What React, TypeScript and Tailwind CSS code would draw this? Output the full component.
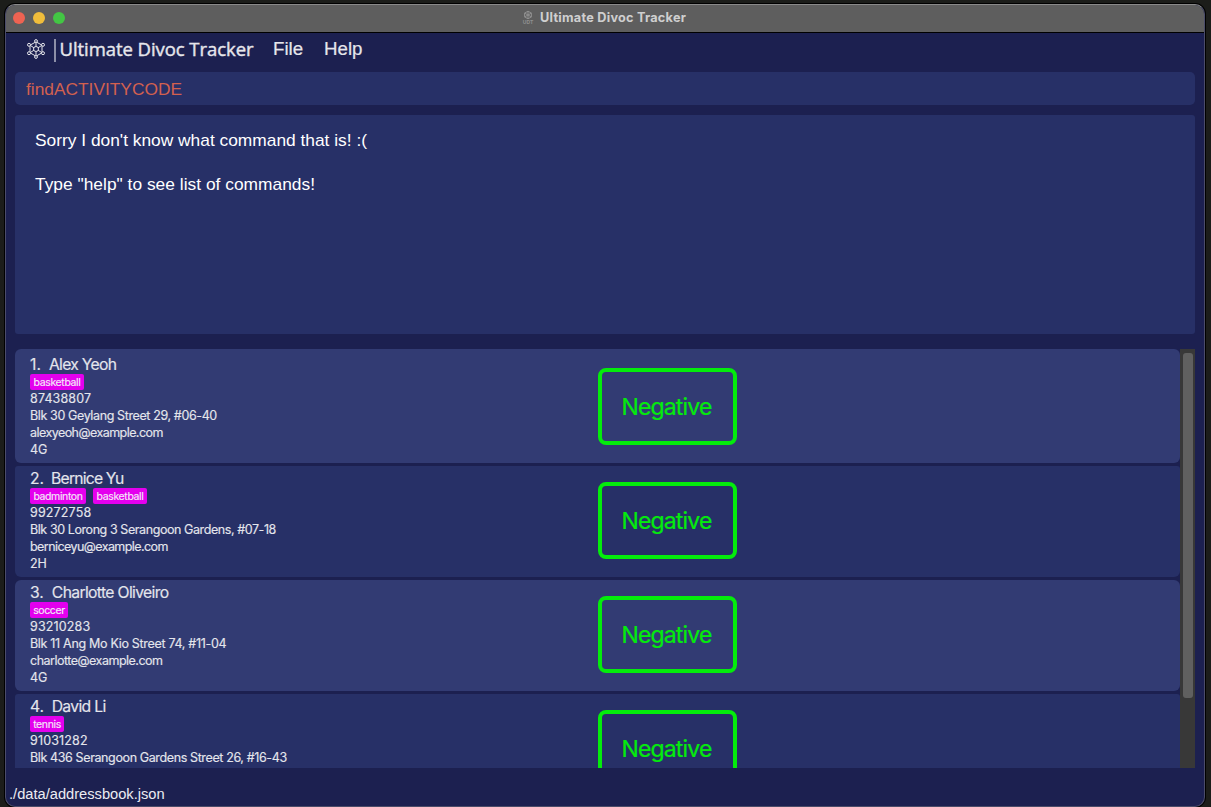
import React from "react";

type Person = {
  index: string;
  name: string;
  nameTracking: string;
  tags: { label: string; width: string }[];
  phone: string;
  address: string;
  addressTracking: string;
  email?: string;
  emailTracking?: string;
  group?: string;
};

const people: Person[] = [
  {
    index: "1.", name: "Alex Yeoh", nameTracking: "ml-[8px] tracking-[-0.7px]",
    tags: [{ label: "basketball", width: "w-[54px]" }],
    phone: "87438807", address: "Blk 30 Geylang Street 29, #06-40", addressTracking: "tracking-[-0.38px]",
    email: "alexyeoh@example.com", emailTracking: "tracking-[-0.55px]", group: "4G",
  },
  {
    index: "2.", name: "Bernice Yu", nameTracking: "ml-[7px] tracking-[-0.8px]",
    tags: [{ label: "badminton", width: "w-[56px]" }, { label: "basketball", width: "w-[54px]" }],
    phone: "99272758", address: "Blk 30 Lorong 3 Serangoon Gardens, #07-18", addressTracking: "tracking-[-0.42px]",
    email: "berniceyu@example.com", emailTracking: "tracking-[-0.57px]", group: "2H",
  },
  {
    index: "3.", name: "Charlotte Oliveiro", nameTracking: "ml-[8px] tracking-[-0.65px]",
    tags: [{ label: "soccer", width: "w-[38px]" }],
    phone: "93210283", address: "Blk 11 Ang Mo Kio Street 74, #11-04", addressTracking: "tracking-[-0.31px]",
    email: "charlotte@example.com", emailTracking: "tracking-[-0.5px]", group: "4G",
  },
  {
    index: "4.", name: "David Li", nameTracking: "ml-[7.5px] tracking-[-0.65px]",
    tags: [{ label: "tennis", width: "w-[34px]" }],
    phone: "91031282", address: "Blk 436 Serangoon Gardens Street 26, #16-43", addressTracking: "tracking-[-0.38px]",
  },
];

function VirusIcon({ className }: { className: string }) {
  return (
    <svg viewBox="0 0 20 20" className={className} fill="none" stroke="currentColor" strokeWidth="1">
      <path d="M10 2.8 16 6.2v7.6L10 17.2 4 13.8V6.2z" />
      <path d="M10 2.4v5M4 6.2l3.9 2.6M16 6.2l-3.9 2.6M4 13.8l3.9-2.6M16 13.8l-3.9-2.6M10 17.6v-5" />
      <circle cx="10" cy="10" r="2.5" />
      <g className="fill-[#1c2050]">
        <circle cx="10" cy="2" r="1.4" />
        <circle cx="10" cy="18" r="1.4" />
        <circle cx="3" cy="5.8" r="1.5" />
        <circle cx="17" cy="5.8" r="1.5" />
        <circle cx="3" cy="14.2" r="1.5" />
        <circle cx="17" cy="14.2" r="1.5" />
      </g>
    </svg>
  );
}

function SmallVirusIcon() {
  return (
    <svg viewBox="0 0 12 10" className="h-[10px] w-[12px]" fill="none" stroke="currentColor" strokeWidth="1">
      <path d="M6 1.2 9.4 3.1v3.8L6 8.8 2.6 6.9V3.1zM6 1v8M2.6 3.1l6.8 3.8M9.4 3.1 2.6 6.9" />
    </svg>
  );
}

function PersonCard({ person, position }: { person: Person; position: number }) {
  const first = position === 0;
  const lit = position % 2 === 0;
  return (
    <li className={`${first ? "h-[114px] pt-[6px]" : "mt-[3px] h-[111px] pt-[3px]"} ${lit ? "bg-[#323b73]" : "bg-[#273067]"} ${lit ? "rounded-[6px]" : "rounded-t-[3px] rounded-b-[6px]"} flex shrink-0 pl-[15px] text-[12.5px] leading-[17px] text-[#e4e5ec]`}>
      <div className="w-[568px] shrink-0 whitespace-nowrap [-webkit-text-stroke:0.15px_#e4e5ec]">
        <h2 className="flex h-[19px] text-[15.7px] leading-[19px]">
          <span>{person.index}</span>
          <span className={person.nameTracking}>{person.name}</span>
        </h2>
        <div className="flex h-4 gap-[7px]">
          {person.tags.map((tag) => (
            <span key={tag.label} className={`${tag.width} h-4 rounded-[2px] bg-[#e400ee] pt-px text-center text-[10.5px] leading-4 tracking-[-0.38px] text-[#fbeafd]`}>
              {tag.label}
            </span>
          ))}
        </div>
        <p className="tracking-[0.15px]">{person.phone}</p>
        <p className={person.addressTracking}>{person.address}</p>
        {person.email && <p className={person.emailTracking}>{person.email}</p>}
        {person.group && <p className="tracking-[-0.1px]">{person.group}</p>}
      </div>
      <div className="mt-[13px] flex h-[77px] w-[139px] items-center justify-center rounded-[8px] border-4 border-[#04ec0c] pr-[2px] pt-[2px] text-[23px] tracking-[-0.85px] text-[#04ec0c] [-webkit-text-stroke:0.2px_#04ec0c]">
        Negative
      </div>
    </li>
  );
}

export default function App() {
  return (
    <div className="h-[807px] w-[1211px] overflow-hidden bg-[#1c1d1a] pl-[5px] pt-[4px] font-['Inter',sans-serif]">
      <div className="flex h-[803px] w-[1200px] flex-col overflow-hidden rounded-[10px] border border-[#4b4c69] border-t-[#8a8a8a] bg-[#1c2050] shadow-[0_0_0_1px_#000]">
        <header className="flex h-[28px] shrink-0 items-center border-b border-black bg-[#5e5e5e]">
          <div className="flex w-[516px] gap-2 pl-[7px]">
            <span className="-mt-px size-3 rounded-full bg-[#ee6352]" />
            <span className="-mt-px size-3 rounded-full bg-[#f0bd3b]" />
            <span className="-mt-px size-3 rounded-full bg-[#43c644]" />
          </div>
          <div className="-mt-[2px] flex w-[12px] flex-col items-center text-[#909090]">
            <SmallVirusIcon />
            <span className="text-[5px] font-bold leading-[5px]">UDT</span>
          </div>
          <h1 className="-mt-[2px] ml-[6px] text-[12.7px] font-bold leading-4 tracking-[0.25px] text-[#cfcfcf]">Ultimate Divoc Tracker</h1>
        </header>
        <nav className="flex h-[39px] shrink-0 items-start text-[#e6e6eb]">
          <VirusIcon className="ml-[20px] mt-[6px] size-5" />
          <span className="ml-[8px] mt-[6px] h-[23px] w-[1.5px] bg-[#8d8fa8]" />
          <span className="ml-[4px] mt-[3px] w-[213.5px] whitespace-nowrap font-['Open_Sans',sans-serif] text-[18.5px] leading-[25px] tracking-[-0.06px] [-webkit-text-stroke:0.4px_#e6e6eb]">Ultimate Divoc Tracker</span>
          <span className="mt-[4px] w-[51px] font-['Liberation_Sans',sans-serif] text-[18.7px] leading-[24px] [-webkit-text-stroke:0.2px_#e6e6eb]">File</span>
          <span className="mt-[4px] font-['Liberation_Sans',sans-serif] text-[18.7px] leading-[24px] [-webkit-text-stroke:0.2px_#e6e6eb]">Help</span>
        </nav>
        <div className="ml-[9px] h-[33px] w-[1180px] shrink-0 rounded-[5px] bg-[#273067] pl-[11px] font-['Liberation_Sans',sans-serif] text-[17.33px] leading-[34px] text-[#d2604f]">findACTIVITYCODE</div>
        <div className="ml-[9px] mt-[10px] h-[219px] w-[1180px] shrink-0 rounded-[3px] bg-[#273067] pl-[20px] pt-[14px] font-['Liberation_Sans',sans-serif] text-[17.35px] leading-[22px] text-white">
          <p>Sorry I don't know what command that is! :(</p>
          <p className="mt-[22px] tracking-[0.02px]">Type "help" to see list of commands!</p>
        </div>
        <main className="ml-[9px] mt-[15px] flex h-[419px] w-[1180px] shrink-0 overflow-hidden">
          <ul className="flex w-[1165px] flex-col">
            {people.map((person, position) => (
              <PersonCard key={person.index} person={person} position={position} />
            ))}
          </ul>
          <div className="w-[15px] bg-[#383838] pl-[3px] pt-[4px]">
            <div className="h-[345px] w-[10px] rounded-[3px] bg-[#606060]" />
          </div>
        </main>
        <footer className="ml-[3px] mt-[16px] font-['Liberation_Sans',sans-serif] text-[14.67px] leading-5 text-[#ececf2]">./data/addressbook.json</footer>
      </div>
    </div>
  );
}
